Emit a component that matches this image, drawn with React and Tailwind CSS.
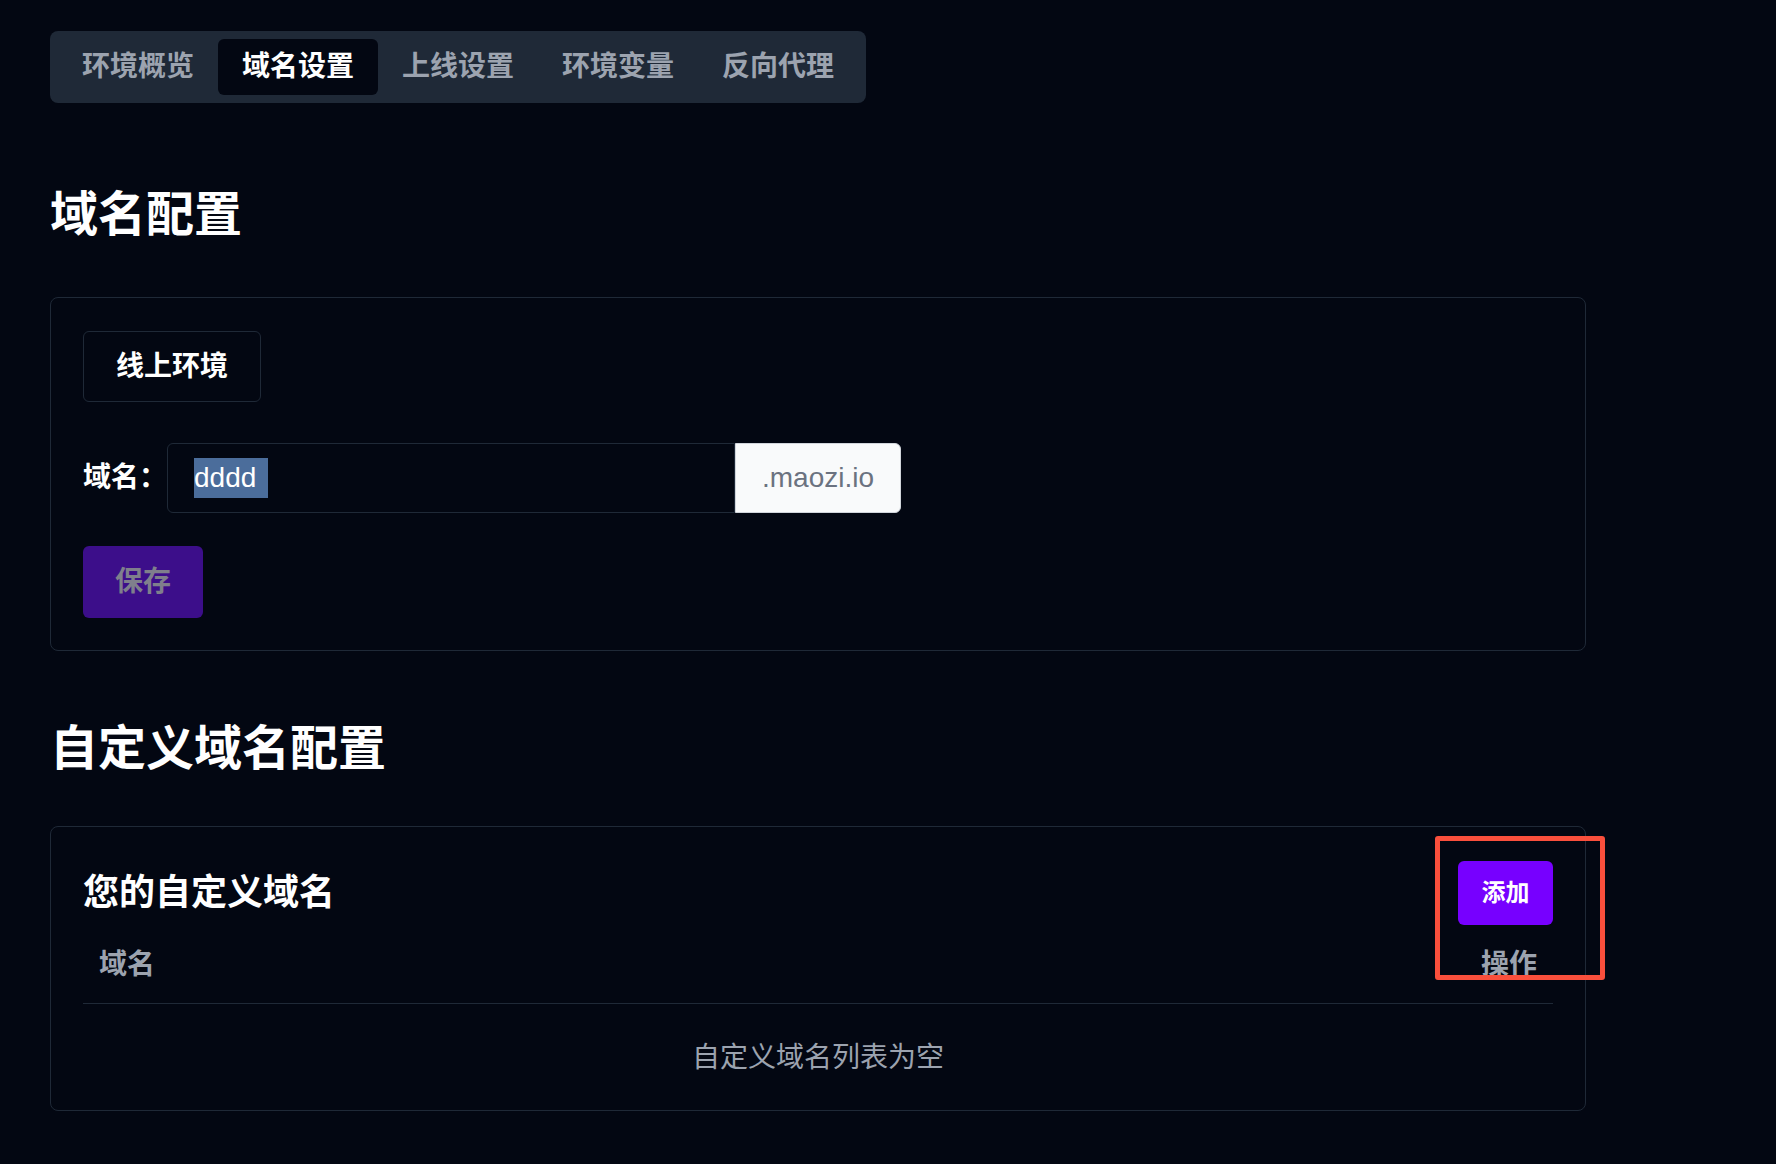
import React from "react";

const tabs = ["环境概览", "域名设置", "上线设置", "环境变量", "反向代理"];

export default function App() {
  const active = 1;

  return (
    <div
      className="min-h-screen bg-[#030712] pl-[50px] pt-[31px] text-white"
      style={{ fontFamily: '"Liberation Sans", "Noto Sans CJK SC", sans-serif' }}
    >
      {/* Tabs */}
      <div className="inline-flex rounded-lg bg-[#1f2937] p-2">
        {tabs.map((t, i) => (
          <div
            key={t}
            className={`flex h-[56px] items-center rounded-md px-[24px] text-[28px] font-bold ${
              i === active ? "bg-[#030712] text-white" : "text-[#9ca3af]"
            }`}
          >
            {t}
          </div>
        ))}
      </div>

      <div className="w-[1536px]">
        {/* 域名配置 */}
        <h2 className="mt-[88px] text-[48px] font-bold leading-none">域名配置</h2>

        <div className="mt-[58px] rounded-lg border border-[#1f2937] px-8 pt-[33px] pb-[32px]">
          <div className="inline-flex h-[71px] items-center rounded-md border border-[#1f2937] px-8 text-[28px] font-bold">
            线上环境
          </div>

          <div className="mt-[41px] flex items-center">
            <div className="w-[84px] text-[28px] font-bold">域名：</div>
            <div className="flex h-[70px] w-[568px] items-center rounded-l-md border border-[#1f2937] pl-[26px]">
              <span className="bg-[#4b6d9b] pr-[12px] text-[28px] leading-[40px] text-white">dddd</span>
            </div>
            <div className="flex h-[70px] items-center rounded-r-md border border-[#d1d5db] bg-[#f9fafb] px-[26px] text-[28px] text-[#6b7280]">
              .maozi.io
            </div>
          </div>

          <button className="mt-[33px] flex h-[72px] w-[120px] items-center justify-center rounded-md bg-[#3c0e8a] text-[28px] font-bold text-[#7f7f8c]">
            保存
          </button>
        </div>

        {/* 自定义域名配置 */}
        <h2 className="mt-[74px] text-[48px] font-bold leading-none">自定义域名配置</h2>

        <div className="relative mt-[53px] rounded-lg border border-[#1f2937] px-8 pt-[34px]">
          <div className="flex items-center justify-between">
            <h3 className="text-[36px] font-bold leading-none">您的自定义域名</h3>
            <button className="flex h-[64px] w-[95px] items-center justify-center rounded-md bg-[#7700ff] text-[24px] font-bold text-white">
              添加
            </button>
          </div>

          <table className="w-full border-collapse">
            <thead>
              <tr className="border-b border-[#1f2937]">
                <th className="h-[78px] px-4 pt-[3px] text-left text-[28px] font-bold text-[#9ca3af]">域名</th>
                <th className="h-[78px] px-4 pt-[3px] text-right text-[28px] font-bold text-[#9ca3af]">操作</th>
              </tr>
            </thead>
            <tbody>
              <tr>
                <td colSpan={2} className="pt-[34px] pb-[32px] text-center text-[28px] leading-[40px] text-[#9ca3af]">
                  自定义域名列表为空
                </td>
              </tr>
            </tbody>
          </table>

          {/* annotation box */}
          <div className="pointer-events-none absolute left-[1384px] top-[9px] z-10 h-[144px] w-[170px] rounded-[3px] border-[5px] border-[#fa4f3c]" />
        </div>
      </div>
    </div>
  );
}
